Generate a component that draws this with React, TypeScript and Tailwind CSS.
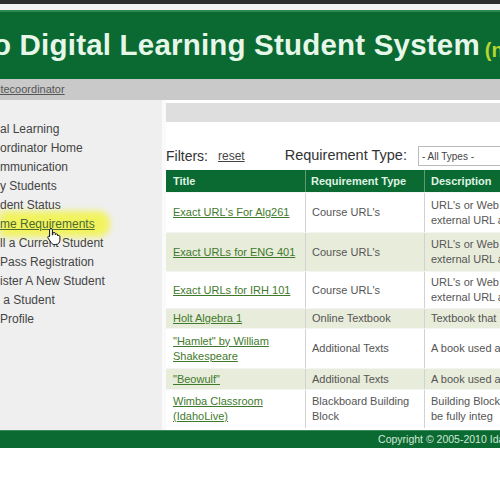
import React from 'react';

const menu = [
  'al Learning',
  'ordinator Home',
  'mmunication',
  'y Students',
  'dent Status',
  'me Requirements',
  'll a Current Student',
  'Pass Registration',
  'ister A New Student',
  ' a Student',
  'Profile',
];

type Row = { title: string[]; type: string[]; desc: string[]; tint: boolean; h: string };

const rows: Row[] = [
  { title: ["Exact URL's For Alg261"], type: ["Course URL's"], desc: ["URL's or Web", 'external URL a'], tint: false, h: 'h-[40px]' },
  { title: ['Exact URLs for ENG 401'], type: ["Course URL's"], desc: ["URL's or Web", 'external URL a'], tint: true, h: 'h-[39px]' },
  { title: ['Exact URLs for IRH 101'], type: ["Course URL's"], desc: ["URL's or Web", 'external URL a'], tint: false, h: 'h-[37px]' },
  { title: ['Holt Algebra 1'], type: ['Online Textbook'], desc: ['Textbook that'], tint: true, h: 'h-[20px]' },
  { title: ['"Hamlet" by William', 'Shakespeare'], type: ['Additional Texts'], desc: ['A book used a'], tint: false, h: 'h-[40px]' },
  { title: ['"Beowulf"'], type: ['Additional Texts'], desc: ['A book used a'], tint: true, h: 'h-[21px]' },
  { title: ['Wimba Classroom', '(IdahoLive)'], type: ['Blackboard Building', 'Block'], desc: ['Building Block', 'be fully integ'], tint: false, h: 'h-[39px]' },
];

// hand pointer hovering the highlighted menu link
function Cursor() {
  return (
    <svg width="14" height="18" viewBox="0 0 14 18" className="absolute left-[47px] top-[127px]">
      <path
        d="M4 1.5c.8 0 1.4.6 1.4 1.4V8l.4-.1V6.6c0-.7.6-1.2 1.3-1.2s1.2.5 1.2 1.2v1.1c.2-.5.7-.8 1.2-.8.7 0 1.2.5 1.2 1.2v.9c.2-.4.6-.6 1-.6.7 0 1.2.5 1.2 1.2v3.6c0 2.4-1.7 4.3-4.1 4.3H7.3c-1.3 0-2.3-.6-3-1.6L1 11c-.4-.6-.2-1.3.3-1.7.5-.3 1.2-.2 1.6.3l-.3-.1V2.9c0-.8.6-1.4 1.4-1.4z"
        fill="#fff"
        stroke="#111"
        strokeWidth="1"
      />
    </svg>
  );
}

export default function App() {
  return (
    <div className="w-[500px] h-[500px] overflow-hidden bg-white relative" style={{ fontFamily: '"Liberation Sans", Arial, sans-serif' }}>
      <div className="h-[4px] bg-[#2e2e2e]" />
      <div className="h-[6px] bg-[#f3f3f3]" />
      <div className="h-[69px] bg-[#0b6a32] border-t-2 border-[#2f8a52] flex items-center whitespace-nowrap">
        <span className="ml-[-7px] text-[29.5px] font-bold text-[#e6f7ea] tracking-[0.2px]">o Digital Learning Student System</span>
        <span className="ml-[5px] mt-[8px] text-[20px] font-bold text-[#b8d630]">(n</span>
      </div>
      <div className="h-[21px] bg-[#c9c9c9] flex items-center">
        <span className="text-[11px] text-[#555] underline ml-[-2px]">itecoordinator</span>
      </div>

      <div className="flex h-[330px]">
        <div className="w-[162px] bg-[#efefef] relative pt-[20px]">
          <div className="absolute left-0 top-[111px] w-[110px] h-[26px] rounded-r-[12px] bg-[#f1f35e] blur-[3px]" />
          <ul className="relative">
            {menu.map((m, i) => (
              <li
                key={i}
                className={`h-[19px] text-[12px] leading-[19px] whitespace-pre ${i === 5 ? 'text-[#4d6a2e] underline' : 'text-[#444]'}`}
              >
                {m}
              </li>
            ))}
          </ul>
          <Cursor />
        </div>
        <div className="w-[4px] bg-[#fafafa]" />
        <div className="flex-1 overflow-hidden">
          <div className="mt-[3px] h-[19px] bg-[#dedede]" />
          <div className="mt-[24px] h-[20px] flex items-center whitespace-nowrap text-[#333]">
            <span className="text-[14px]">Filters:</span>
            <span className="ml-[10px] text-[12px] underline text-[#444]">reset</span>
            <span className="ml-[40px] text-[14.5px]">Requirement Type:</span>
            <div className="ml-[11px] h-[20px] w-[100px] shrink-0 border border-[#bbb] flex items-center px-[3px] text-[10px] text-[#444]">
              - All Types -
            </div>
          </div>
          <div className="mt-[4px] w-[420px]">
            <div className="flex h-[22px] bg-[#0b6a32] text-[11px] font-bold text-[#dff3e3] items-center">
              <div className="w-[140px] px-[7px] border-r border-[#5f9a6e] h-full flex items-center">Title</div>
              <div className="w-[119px] px-[5px] border-r border-[#5f9a6e] h-full flex items-center">Requirement Type</div>
              <div className="flex-1 px-[6px] h-full flex items-center">Description</div>
            </div>
            {rows.map((r, i) => (
              <div
                key={i}
                className={`flex ${r.h} text-[11px] leading-[15px] border-t border-[#f4f4f4] ${r.tint ? 'bg-[#e8ecdb]' : 'bg-white'}`}
              >
                <div className="w-[140px] px-[7px] border-r border-[#d2d2d2] flex flex-col justify-center text-[#3f7a2c] underline">
                  {r.title.map((t, j) => (
                    <span key={j}>{t}</span>
                  ))}
                </div>
                <div className="w-[119px] px-[6px] border-r border-[#d2d2d2] flex flex-col justify-center text-[#555] whitespace-nowrap">
                  {r.type.map((t, j) => (
                    <span key={j}>{t}</span>
                  ))}
                </div>
                <div className="flex-1 px-[6px] flex flex-col justify-center text-[#555] whitespace-nowrap">
                  {r.desc.map((t, j) => (
                    <span key={j}>{t}</span>
                  ))}
                </div>
              </div>
            ))}
          </div>
        </div>
      </div>

      <div className="h-[18px] bg-[#0b6a32] border-t border-[#3b8a58] flex items-center justify-end whitespace-nowrap overflow-hidden">
        <span className="text-[10.5px] text-[#cfe8d5] mr-[-16px]">Copyright © 2005-2010 Idaho</span>
      </div>
    </div>
  );
}
